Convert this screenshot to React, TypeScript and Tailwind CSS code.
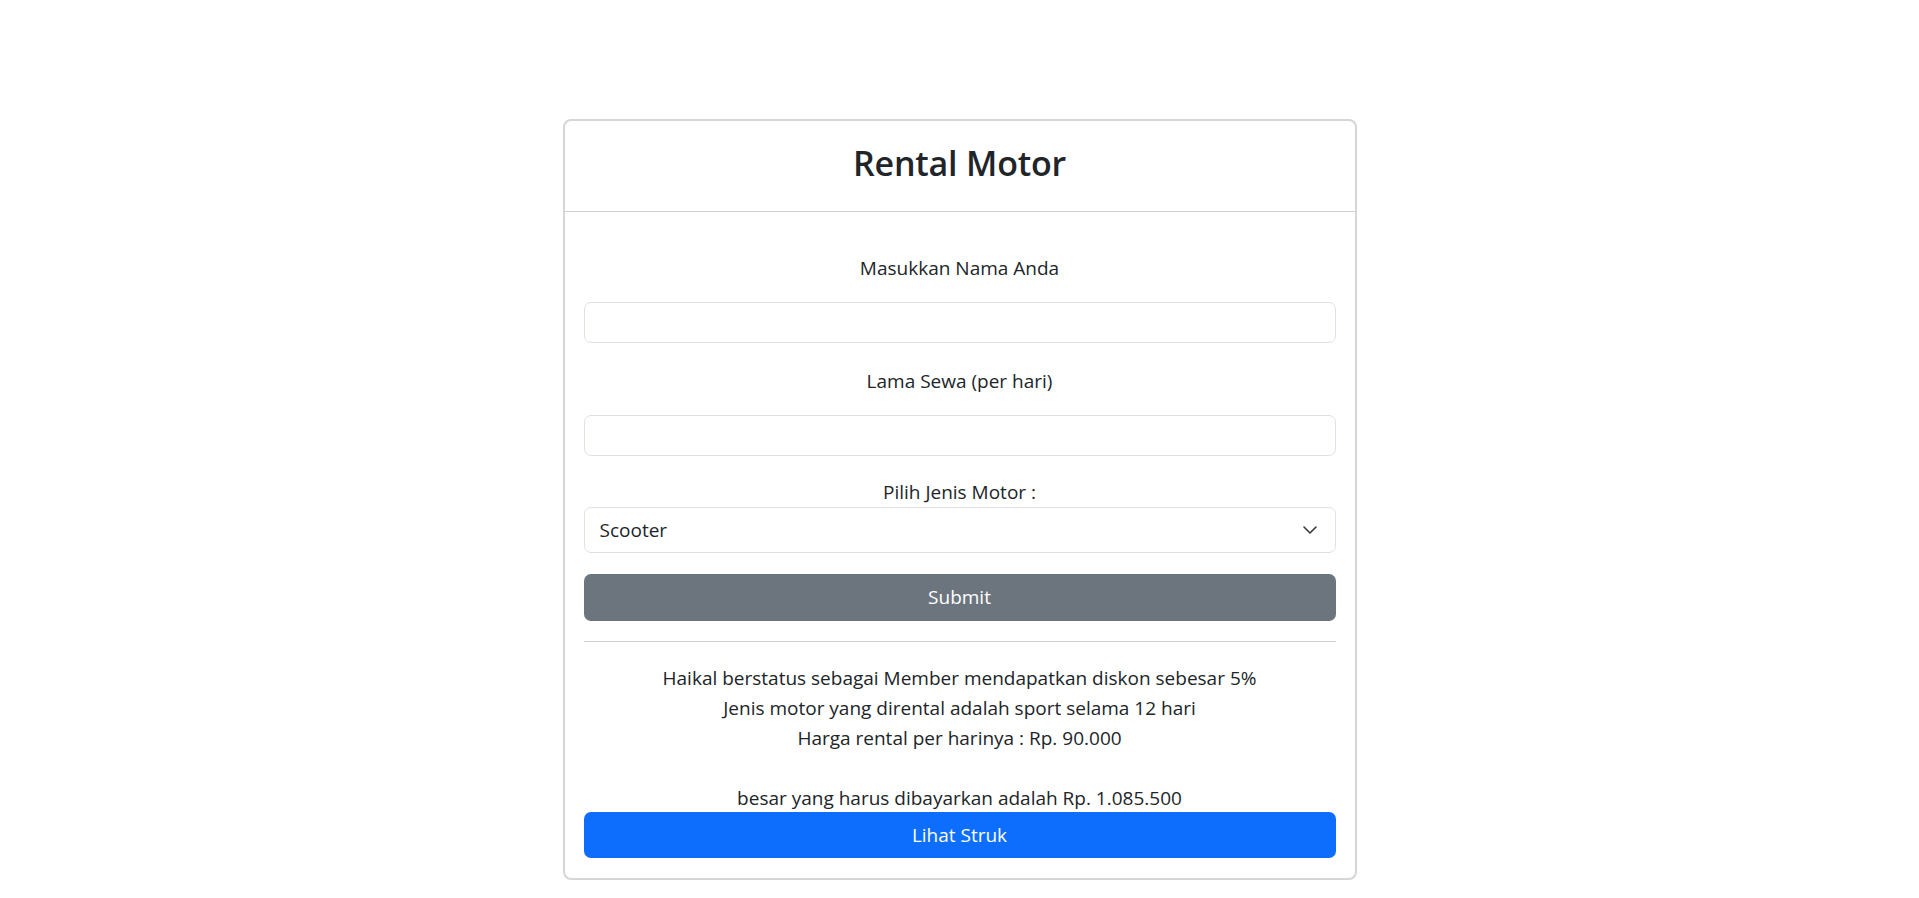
import React from "react";

export default function App() {
  const font = { fontFamily: '"Open Sans", "Noto Sans", sans-serif' };
  return (
    <div className="min-h-screen bg-white pt-[119px] text-[#212529]" style={font}>
      <div className="mx-auto w-[794px] rounded-[8px] border-2 border-[#d6d6d6] bg-white">
        <div className="flex h-[91px] items-center justify-center border-b border-[#cfcfcf] pb-[7px]">
          <h2 className="text-[34px] font-semibold leading-none tracking-[-0.2px]">Rental Motor</h2>
        </div>
        <div className="flex flex-col px-[19px] pb-[20px] pt-[41px] text-[19px]">
          <div className="h-[30px] text-center leading-[30px]">Masukkan Nama Anda</div>
          <input className="mt-[19px] h-[41px] w-full rounded-[7px] border border-[#dee2e6] outline-none" />
          <div className="mt-[23px] h-[30px] text-center leading-[30px]">Lama Sewa (per hari)</div>
          <input className="mt-[19px] h-[41px] w-full rounded-[7px] border border-[#dee2e6] outline-none" />
          <div className="mt-[21px] h-[30px] text-center leading-[30px]">Pilih Jenis Motor :</div>
          <div className="flex h-[46px] items-center justify-between rounded-[7px] border border-[#dee2e6] pl-[15px] pr-[17px]">
            <span className="leading-[30px]">Scooter</span>
            <svg width="16" height="16" viewBox="0 0 16 16" fill="none">
              <path d="m2 5 6 6 6-6" stroke="#343a40" strokeWidth="1.6" strokeLinecap="round" strokeLinejoin="round" />
            </svg>
          </div>
          <button className="mt-[21px] flex h-[47px] w-full items-center justify-center rounded-[7px] bg-[#6c757d] text-white">
            Submit
          </button>
          <div className="mt-[20px] h-px bg-[#cfcfcf]" />
          <div className="mt-[21px] text-center leading-[30px]">
            <div>Haikal berstatus sebagai Member mendapatkan diskon sebesar 5%</div>
            <div>Jenis motor yang dirental adalah sport selama 12 hari</div>
            <div>Harga rental per harinya : Rp. 90.000</div>
            <div className="h-[30px]" />
            <div>besar yang harus dibayarkan adalah Rp. 1.085.500</div>
          </div>
          <button className="-mt-px flex h-[46px] w-full items-center justify-center rounded-[7px] bg-[#0d6efd] text-white">
            Lihat Struk
          </button>
        </div>
      </div>
    </div>
  );
}
